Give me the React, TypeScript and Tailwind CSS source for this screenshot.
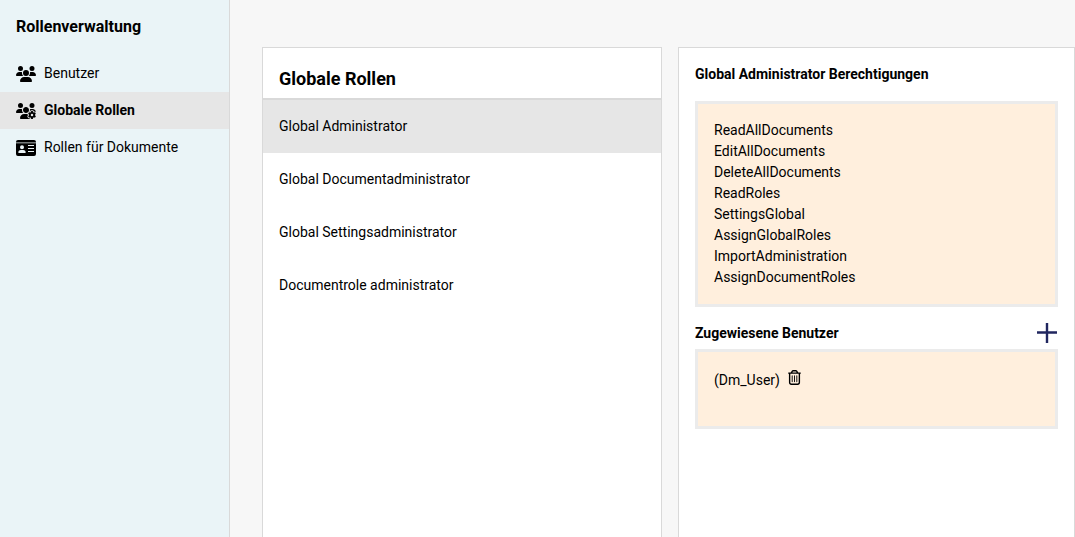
import { useState } from "react";
import type { ReactNode } from "react";
import { FaUsers, FaUsersGear, FaRegTrashCan } from "react-icons/fa6";

function CardIcon() {
  return (
    <svg viewBox="0 0 20 16" className="h-4 w-5" aria-hidden="true">
      <path
        fill="currentColor"
        fillRule="evenodd"
        d="M2 0h16a2 2 0 0 1 2 2v.5H0V2a2 2 0 0 1 2-2ZM0 3.200h20V14a2 2 0 0 1-2 2H2a2 2 0 0 1-2-2V3.200ZM6 5.200a2 2 0 1 0 0 4 2 2 0 0 0 0-4ZM5 10a2.600 2.600 0 0 0-2.700 2.600c0 .3.2.5.5.5h6.400c.3 0 .5-.2.5-.5A2.600 2.600 0 0 0 7 10H5ZM12 5v1h6v-1h-6Zm0 3v1h6v-1h-6Zm0 3v1h6v-1h-6Z"
      />
    </svg>
  );
}

const navItems: { label: string; icon: ReactNode }[] = [
  { label: "Benutzer", icon: <FaUsers className="h-4 w-5" /> },
  { label: "Globale Rollen", icon: <FaUsersGear className="h-4 w-5" /> },
  { label: "Rollen für Dokumente", icon: <CardIcon /> },
];

const roles = [
  "Global Administrator",
  "Global Documentadministrator",
  "Global Settingsadministrator",
  "Documentrole administrator",
];

const permissions = [
  "ReadAllDocuments",
  "EditAllDocuments",
  "DeleteAllDocuments",
  "ReadRoles",
  "SettingsGlobal",
  "AssignGlobalRoles",
  "ImportAdministration",
  "AssignDocumentRoles",
];

export default function App() {
  const [role, setRole] = useState(roles[0]);

  return (
    <div className="flex min-h-screen bg-[#f7f7f7] font-['Roboto',sans-serif] text-sm text-black">
      <aside className="w-[230px] shrink-0 border-r border-[#d9d9d9] bg-[#eaf4f7]">
        <h1 className="px-4 pt-[15px] pb-4 text-base font-bold">Rollenverwaltung</h1>
        <nav>
          {navItems.map((item) => (
            <a
              key={item.label}
              href="#"
              aria-current={item.label === "Globale Rollen" ? "page" : undefined}
              className="flex items-center gap-2 px-4 py-2 leading-[21px] aria-[current=page]:bg-[#e6e6e6] aria-[current=page]:font-bold"
            >
              {item.icon}
              <span>{item.label}</span>
            </a>
          ))}
        </nav>
      </aside>

      <main className="flex min-w-0 grow gap-4 pt-[47px] pl-8">
        <section className="w-[400px] shrink-0 border border-b-0 border-[#d9d9d9] bg-white">
          <h2 className="border-b-2 border-[#d9d9d9] px-4 pt-[17px] pb-[5px] text-lg font-bold">
            Globale Rollen
          </h2>
          <ul>
            {roles.map((name) => (
              <li key={name}>
                <button
                  type="button"
                  aria-pressed={name === role}
                  onClick={() => setRole(name)}
                  className="block w-full px-4 py-4 text-left leading-[21px] aria-pressed:bg-[#e6e6e6]"
                >
                  {name}
                </button>
              </li>
            ))}
          </ul>
        </section>

        <section className="min-w-0 grow border border-b-0 border-[#d9d9d9] bg-white px-4 pt-4">
          <h2 className="font-bold">{role} Berechtigungen</h2>
          <ul className="mt-[17px] border-3 border-[#ebebeb] bg-[#ffefdd] p-4 leading-[21px]">
            {permissions.map((permission) => (
              <li key={permission}>{permission}</li>
            ))}
          </ul>

          <div className="mt-4 flex items-center justify-between pr-px">
            <h2 className="font-bold">Zugewiesene Benutzer</h2>
            <button type="button" aria-label="Benutzer hinzufügen" className="text-[#20265f]">
              <svg viewBox="0 0 20 20" className="size-5" aria-hidden="true">
                <path d="M10 0v20M0 9.500h20" stroke="currentColor" strokeWidth="2.400" />
              </svg>
            </button>
          </div>
          <div className="mt-1.5 min-h-20 border-3 border-[#ebebeb] bg-[#ffefdd] p-4 leading-6">
            <div className="flex items-start gap-2">
              <span>(Dm_User)</span>
              <button type="button" aria-label="Benutzer entfernen" className="pt-0.5">
                <FaRegTrashCan className="h-[15px] w-[13px]" />
              </button>
            </div>
          </div>
        </section>
      </main>
    </div>
  );
}
